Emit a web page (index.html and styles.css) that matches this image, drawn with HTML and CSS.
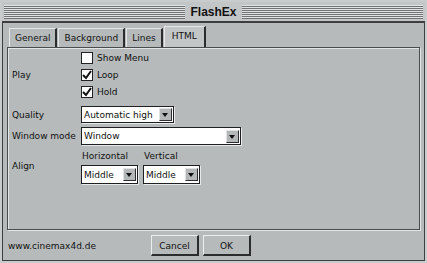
FILE: index.html
```html
<!DOCTYPE html>
<html>
<head>
	<title>FlashEx</title>
	<meta charset="UTF-8">
	<link rel="stylesheet" href="styles.css">
</head>
<body>

<div id="window">

	<div id="titlebar">
		<div class="stripes"></div>
		<div id="title">FlashEx</div>
		<div class="stripes"></div>
	</div>

	<div id="frame">

		<div id="tabs">
			<div class="tab">General</div>
			<div class="tab">Background</div>
			<div class="tab">Lines</div>
			<div class="tab active">HTML</div>
		</div>

		<div id="panel">

			<div class="row">
				<div class="label">Play</div>
				<div class="checks">
					<div class="check"><span class="box"></span>Show Menu</div>
					<div class="check"><span class="box checked"><svg width="10" height="10" viewBox="0 0 10 10"><path d="M1 5 L4 8 L9 1" fill="none" stroke="#111" stroke-width="2"/></svg></span>Loop</div>
					<div class="check"><span class="box checked"><svg width="10" height="10" viewBox="0 0 10 10"><path d="M1 5 L4 8 L9 1" fill="none" stroke="#111" stroke-width="2"/></svg></span>Hold</div>
				</div>
			</div>

			<div class="row quality">
				<div class="label">Quality</div>
				<div class="select w-quality"><span class="value">Automatic high</span><span class="arrow"></span></div>
			</div>

			<div class="row mode">
				<div class="label">Window mode</div>
				<div class="select w-mode"><span class="value">Window</span><span class="arrow"></span></div>
			</div>

			<div class="row align">
				<div class="label">Align</div>
				<div class="pair">
					<div class="field">
						<div class="caption">Horizontal</div>
						<div class="select w-small"><span class="value">Middle</span><span class="arrow"></span></div>
					</div>
					<div class="field">
						<div class="caption">Vertical</div>
						<div class="select w-small"><span class="value">Middle</span><span class="arrow"></span></div>
					</div>
				</div>
			</div>

		</div>

		<div id="footer">
			<div id="url">www.cinemax4d.de</div>
			<div class="button">Cancel</div>
			<div class="button">OK</div>
		</div>

	</div>

</div>

</body>
</html>
```

FILE: styles.css
```css
* {
	box-sizing: border-box;
}
body {
	margin: 0;
	padding: 0;
	background: #c9cccd;
	font-family: "DejaVu Sans", Verdana, sans-serif;
	font-size: 9px;
	color: #111;
}
#window {
	width: 427px;
	height: 263px;
	padding: 2px 2px 1px 2px;
	background: #c9cccd;
}

/* barra de titulo */
#titlebar {
	display: flex;
	align-items: center;
	height: 19px;
	padding: 0 2px;
	background: #c3c6c7;
}
.stripes {
	flex: 1;
	height: 14px;
	background: repeating-linear-gradient(to bottom, #e2e4e4 0px, #e2e4e4 1px, #6f7374 1px, #6f7374 2px);
}
#title {
	padding: 0 5px;
	font-family: "Liberation Sans", Arial, sans-serif;
	font-weight: bold;
	font-size: 12px;
	color: #111;
}

#frame {
	height: 240px;
	border: 1px solid #3c3e3f;
	border-top-width: 2px;
	background: #b6babb;
	padding: 4px 4px 0 4px;
}

/* pestañas */
#tabs {
	display: flex;
	align-items: flex-end;
	padding-left: 2px;
	height: 20px;
	gap: 1px;
}
.tab {
	height: 19px;
	line-height: 18px;
	padding: 0 5px 0 5px;
	border-top: 1px solid #e6e8e8;
	border-left: 1px solid #e6e8e8;
	border-right: 2px solid #2a2c2d;
	background: #b6babb;
}
.tab.active {
	height: 21px;
	line-height: 19px;
	padding: 0 7px 0 7px;
	background: #c2c6c7;
}

#panel {
	height: 183px;
	border: 1px solid #4a4d4e;
	box-shadow: inset 1px 1px 0 #e4e6e6, 1px 1px 0 #e4e6e6;
	padding: 1px 0 0 4px;
}

.row {
	display: flex;
	align-items: center;
}
.label {
	width: 69px;
	flex: none;
}

.check {
	display: flex;
	align-items: center;
	height: 17px;
}
.box {
	width: 12px;
	height: 12px;
	margin-right: 4px;
	background: #fff;
	border: 1px solid #222;
	display: flex;
	align-items: center;
	justify-content: center;
}

.select {
	display: flex;
	align-items: center;
	height: 17px;
	background: #fff;
	border: 1px solid #1e1f20;
	box-shadow: 1px 1px 0 #e8eaea;
	padding: 0 1px 0 2px;
}
.select .value {
	flex: 1;
}
.arrow {
	width: 13px;
	height: 13px;
	background: #b3b7b8;
	border: 1px solid #2c2e2f;
	border-top-color: #e0e2e2;
	border-left-color: #e0e2e2;
	position: relative;
}
.arrow::after {
	content: "";
	position: absolute;
	left: 2px;
	top: 4px;
	border-left: 3px solid transparent;
	border-right: 3px solid transparent;
	border-top: 4px solid #111;
}
.w-quality {
	width: 93px;
}
.w-mode {
	width: 160px;
	height: 18px;
}
.w-small {
	width: 57px;
	height: 19px;
}

.quality {
	margin-top: 6px;
}
.mode {
	margin-top: 4px;
}
.align {
	margin-top: 2px;
}
.pair {
	display: flex;
	gap: 5px;
}
.caption {
	height: 18px;
	line-height: 18px;
	padding-left: 1px;
}

#footer {
	display: flex;
	align-items: center;
	height: 31px;
}
#url {
	width: 144px;
	padding-left: 1px;
}
.button {
	width: 48px;
	height: 21px;
	line-height: 20px;
	text-align: center;
	margin-right: 4px;
	border: 1px solid #2a2c2d;
	border-top-color: #eceeee;
	border-left-color: #eceeee;
	border-right-width: 2px;
	border-bottom-width: 2px;
	background: #b6babb;
}
```
